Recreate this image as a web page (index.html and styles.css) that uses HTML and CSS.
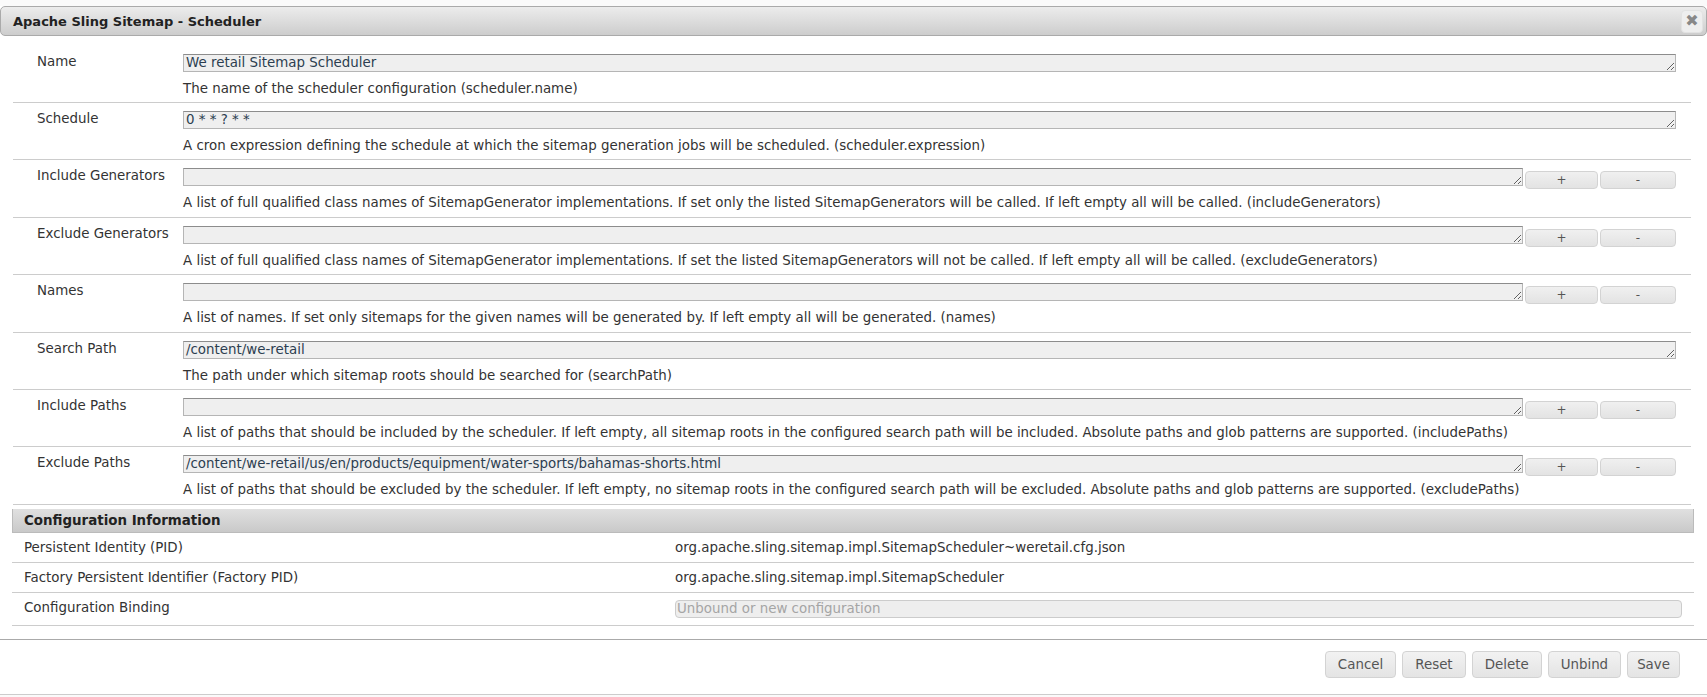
FILE: index.html
```html
<!DOCTYPE html>
<html lang="en">
<head>
    <meta charset="UTF-8">
    <title>Apache Sling Sitemap - Scheduler</title>
    <link rel="stylesheet" href="styles.css">
</head>
<body>
    <div class="behind-top"></div>
    <div class="dialog">
        <div class="titlebar">
            <span class="title">Apache Sling Sitemap - Scheduler</span>
            <button class="close" title="close">&#10006;</button>
        </div>
        <div class="dialog-body">
            <div class="props">
                <div class="prop">
                    <div class="prop-label">Name</div>
                    <div class="prop-value">
                        <div class="field"><textarea>We retail Sitemap Scheduler</textarea></div>
                        <div class="help">The name of the scheduler configuration (scheduler.name)</div>
                    </div>
                </div>
                <div class="prop">
                    <div class="prop-label">Schedule</div>
                    <div class="prop-value">
                        <div class="field"><textarea>0 * * ? * *</textarea></div>
                        <div class="help">A cron expression defining the schedule at which the sitemap generation jobs will be scheduled. (scheduler.expression)</div>
                    </div>
                </div>
                <div class="prop">
                    <div class="prop-label">Include Generators</div>
                    <div class="prop-value">
                        <div class="field"><textarea></textarea><button class="mini plus">+</button><button class="mini minus">-</button></div>
                        <div class="help">A list of full qualified class names of SitemapGenerator implementations. If set only the listed SitemapGenerators will be called. If left empty all will be called. (includeGenerators)</div>
                    </div>
                </div>
                <div class="prop">
                    <div class="prop-label">Exclude Generators</div>
                    <div class="prop-value">
                        <div class="field"><textarea></textarea><button class="mini plus">+</button><button class="mini minus">-</button></div>
                        <div class="help">A list of full qualified class names of SitemapGenerator implementations. If set the listed SitemapGenerators will not be called. If left empty all will be called. (excludeGenerators)</div>
                    </div>
                </div>
                <div class="prop">
                    <div class="prop-label">Names</div>
                    <div class="prop-value">
                        <div class="field"><textarea></textarea><button class="mini plus">+</button><button class="mini minus">-</button></div>
                        <div class="help">A list of names. If set only sitemaps for the given names will be generated by. If left empty all will be generated. (names)</div>
                    </div>
                </div>
                <div class="prop">
                    <div class="prop-label">Search Path</div>
                    <div class="prop-value">
                        <div class="field"><textarea>/content/we-retail</textarea></div>
                        <div class="help">The path under which sitemap roots should be searched for (searchPath)</div>
                    </div>
                </div>
                <div class="prop">
                    <div class="prop-label">Include Paths</div>
                    <div class="prop-value">
                        <div class="field"><textarea></textarea><button class="mini plus">+</button><button class="mini minus">-</button></div>
                        <div class="help">A list of paths that should be included by the scheduler. If left empty, all sitemap roots in the configured search path will be included. Absolute paths and glob patterns are supported. (includePaths)</div>
                    </div>
                </div>
                <div class="prop">
                    <div class="prop-label">Exclude Paths</div>
                    <div class="prop-value">
                        <div class="field"><textarea>/content/we-retail/us/en/products/equipment/water-sports/bahamas-shorts.html</textarea><button class="mini plus">+</button><button class="mini minus">-</button></div>
                        <div class="help">A list of paths that should be excluded by the scheduler. If left empty, no sitemap roots in the configured search path will be excluded. Absolute paths and glob patterns are supported. (excludePaths)</div>
                    </div>
                </div>
            </div>

            <div class="info">
                <div class="info-head">Configuration Information</div>
                <div class="info-row">
                    <div class="info-label">Persistent Identity (PID)</div>
                    <div class="info-value">org.apache.sling.sitemap.impl.SitemapScheduler~weretail.cfg.json</div>
                </div>
                <div class="info-row">
                    <div class="info-label">Factory Persistent Identifier (Factory PID)</div>
                    <div class="info-value">org.apache.sling.sitemap.impl.SitemapScheduler</div>
                </div>
                <div class="info-row binding">
                    <div class="info-label">Configuration Binding</div>
                    <div class="info-value"><select class="binding-select"><option>Unbound or new configuration</option></select></div>
                </div>
            </div>
        </div>
        <div class="buttonpane">
            <button class="btn">Cancel</button>
            <button class="btn">Reset</button>
            <button class="btn">Delete</button>
            <button class="btn">Unbind</button>
            <button class="btn btn-save">Save</button>
        </div>
    </div>
    <div class="behind-bottom"></div>
</body>
</html>
```

FILE: styles.css
```css
html, body {
    margin: 0;
    padding: 0;
    background-color: #fff;
    font-family: "DejaVu Sans", Verdana, sans-serif;
    font-size: 13.4px;
    color: #333;
    overflow: hidden;
}
.behind-top {
    height: 6px;
    background: #fafafa;
}
.titlebar {
    height: 28px;
    display: flex;
    align-items: center;
    justify-content: space-between;
    border: 1px solid #aaa;
    border-radius: 5px;
    background: linear-gradient(to bottom, #ececec, #cdcdcd);
    padding: 0 3px 0 12px;
}
.title {
    font-weight: bold;
    font-size: 13px;
    color: #222;
}
.close {
    width: 22px;
    height: 23px;
    padding: 0;
    border: 1px solid #e2e2e2;
    border-radius: 4px;
    background: #eee;
    color: #888;
    font-family: "DejaVu Sans", sans-serif;
    font-size: 16px;
    line-height: 20px;
    font-weight: bold;
}
.dialog-body {
    padding-top: 9.5px;
}
.props {
    margin: 0 16px 0 13px;
}
.prop {
    display: flex;
    border-bottom: 1px solid #ccc;
}
.prop-label {
    width: 146px;
    padding: 7px 0 0 24px;
    line-height: 18px;
}
.prop-value {
    flex: 1;
    padding: 8px 15px 5.43px 0;
}
.field {
    display: flex;
    height: 18px;
}
.field textarea {
    flex: 1;
    box-sizing: border-box;
    height: 18px;
    margin: 0;
    padding: 0 2px;
    border: 1px solid #b5b5b5;
    border-top-color: #8c8c8c;
    background: #efefef;
    font-family: "DejaVu Sans", Verdana, sans-serif;
    font-size: 13.4px;
    line-height: 16px;
    color: #2c3e50;
    overflow: hidden;
    white-space: nowrap;
}
.mini {
    box-sizing: border-box;
    height: 18px;
    margin: 3px 0 0 2px;
    padding: 0;
    border: 1px solid #d3d3d3;
    border-radius: 4px;
    background: linear-gradient(to bottom, #f0f0f0, #e3e3e3);
    font-family: "DejaVu Sans", Verdana, sans-serif;
    font-size: 12px;
    line-height: 14px;
    color: #555;
}
.plus {
    width: 73px;
}
.minus {
    width: 76px;
}
.help {
    margin-top: 9px;
    line-height: 16px;
    white-space: nowrap;
}
.info {
    margin: 4px 13px 0 12px;
}
.info-head {
    height: 23px;
    line-height: 23px;
    padding-left: 11px;
    border: 1px solid #bbb;
    border-width: 0 1px 1px 1px;
    background: linear-gradient(to bottom, #e0e0e0, #c9c9c9);
    font-weight: bold;
    color: #222;
}
.info-row {
    display: flex;
    border-bottom: 1px solid #ccc;
    line-height: 16px;
    padding: 7px 0 6px;
}
.info-row.binding {
    padding: 7px 0;
}
.info-label {
    width: 651px;
    padding-left: 12px;
}
.info-value {
    flex: 1;
    padding-right: 12px;
}
.binding-select {
    width: 100%;
    height: 18px;
    padding: 0 1px;
    border: 1px solid #ccc;
    border-radius: 4px;
    background: #eee;
    color: #a5a5a5;
    font-family: "DejaVu Sans", Verdana, sans-serif;
    font-size: 13.4px;
    line-height: 16px;
    appearance: none;
}
.buttonpane {
    margin-top: 13px;
    border-top: 1px solid #aaa;
    padding: 11px 27px 12px 0;
    display: flex;
    justify-content: flex-end;
    gap: 6px;
}
.btn {
    height: 27px;
    padding: 0 12px;
    border: 1px solid #d3d3d3;
    border-radius: 4px;
    background: linear-gradient(to bottom, #f2f2f2, #e4e4e4);
    font-family: "DejaVu Sans", Verdana, sans-serif;
    font-size: 13.4px;
    color: #555;
}
.btn-save {
    padding: 0 9px;
}
.behind-bottom {
    margin-top: 4px;
    border-top: 1px solid #ccc;
    height: 10px;
    background: #fafafa;
}
```
